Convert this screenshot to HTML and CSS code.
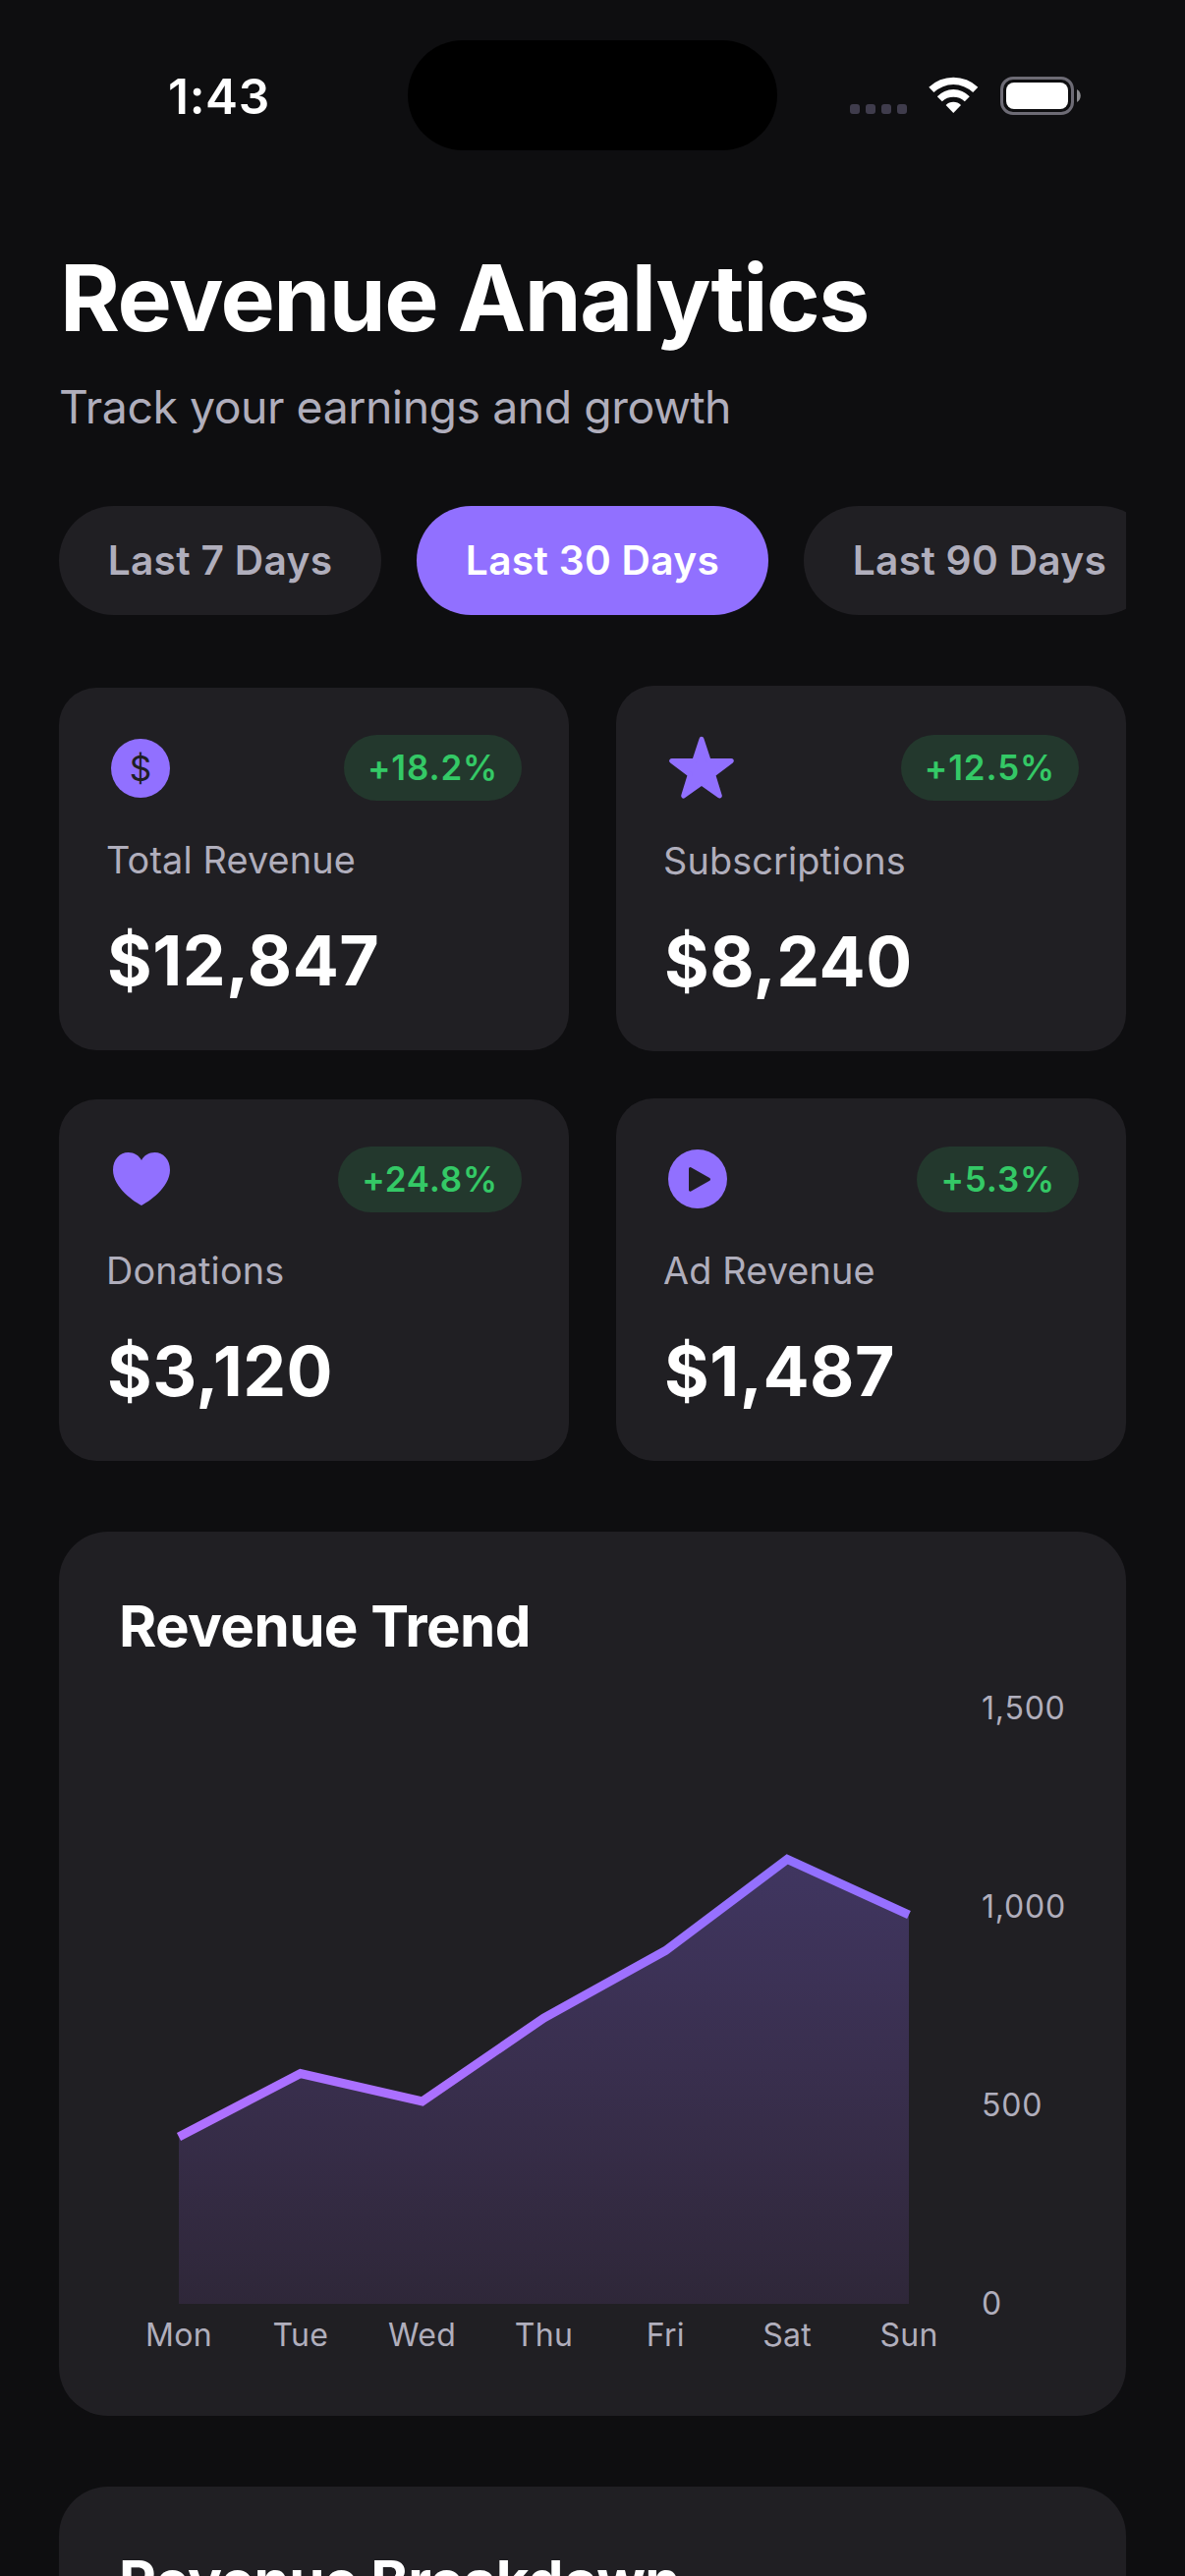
FILE: index.html
```html
<!DOCTYPE html>
<html lang="en">
<head>
  <meta charset="UTF-8">
  <meta name="viewport" content="width=device-width, initial-scale=1.0">
  <title>Revenue Analytics</title>
  <link rel="stylesheet" href="styles.css">
</head>
<body>
  <div class="status-bar">
    <div class="time">1:43</div>
    <div class="island"></div>
    <div class="status-icons">
      <div class="signal"><i></i><i></i><i></i><i></i></div>
      <svg class="wifi" width="51" height="38" viewBox="0 0 51 38" fill="#fff">
        <path d="M0.3 10.8A36 36 0 0 1 50.3 10.8L45.2 16A29 29 0 0 0 5.4 16Z"/>
        <path d="M8.8 20.2A22.6 22.6 0 0 1 41.8 20.2L36.8 25.2A17 17 0 0 0 13.8 25.2Z"/>
        <path d="M17.6 29A11 11 0 0 1 33 29L25.3 37Z"/>
      </svg>
      <svg class="battery" width="82" height="39" viewBox="0 0 82 39">
        <rect x="1.5" y="1.5" width="72" height="36" rx="11.5" fill="none" stroke="#6d6b75" stroke-width="3"/>
        <rect x="6" y="6" width="63" height="27" rx="8" fill="#fff"/>
        <path d="M78 13C83 15.500 83 23.500 78 26Z" fill="#8a8a8e"/>
      </svg>
    </div>
  </div>

  <main class="content">
    <h1>Revenue Analytics</h1>
    <p class="subtitle">Track your earnings and growth</p>

    <div class="filters">
      <button class="pill pill-short">Last 7 Days</button>
      <button class="pill active">Last 30 Days</button>
      <button class="pill">Last 90 Days</button>
    </div>

    <div class="stats">
      <div class="stat-card total">
        <div class="stat-header">
          <svg class="icon" width="72" height="66" viewBox="0 0 72 66">
            <circle cx="35" cy="34" r="30"/>
            <text class="dollar" x="35" y="46.500" text-anchor="middle">$</text>
          </svg>
          <span class="badge">+18.2%</span>
        </div>
        <div class="stat-label">Total Revenue</div>
        <div class="stat-value">$12,847</div>
      </div>

      <div class="stat-card subscriptions">
        <div class="stat-header">
          <svg class="icon" width="72" height="66" viewBox="0 0 72 66">
            <path class="rounded" d="M39 6.400L46.200 28.500L69.300 28.500L50.700 42.600L57.300 64L39 51L20.700 64L27.300 42.600L8.700 28.500L31.800 28.500Z"/>
          </svg>
          <span class="badge">+12.5%</span>
        </div>
        <div class="stat-label">Subscriptions</div>
        <div class="stat-value">$8,240</div>
      </div>

      <div class="stat-card donations">
        <div class="stat-header">
          <svg class="icon" width="72" height="66" viewBox="0 0 72 66">
            <path d="M36 60C30 57 7 42 7 24C7 13 14 6 22.500 6C28.500 6 33.500 9 36 14C38.500 9 43.500 6 49.500 6C58 6 65 13 65 24C65 42 42 57 36 60Z"/>
          </svg>
          <span class="badge">+24.8%</span>
        </div>
        <div class="stat-label">Donations</div>
        <div class="stat-value">$3,120</div>
      </div>

      <div class="stat-card ads">
        <div class="stat-header">
          <svg class="icon" width="72" height="66" viewBox="0 0 72 66">
            <circle cx="35" cy="34" r="30"/>
            <path class="play" d="M27.500 23.500L46.500 34.400L27.500 45.300Z"/>
          </svg>
          <span class="badge">+5.3%</span>
        </div>
        <div class="stat-label">Ad Revenue</div>
        <div class="stat-value">$1,487</div>
      </div>
    </div>

    <section class="panel">
      <h2>Revenue Trend</h2>
      <div class="chart">
        <svg class="plot" width="867" height="606" viewBox="0 0 867 606">
          <defs>
            <linearGradient id="area" x1="0" y1="0" x2="0" y2="1">
              <stop offset="0" stop-color="#9170ff" stop-opacity="0.28"/>
              <stop offset="1" stop-color="#b070ff" stop-opacity="0.1"/>
            </linearGradient>
            <linearGradient id="line" x1="0" y1="0" x2="0" y2="1">
              <stop offset="0" stop-color="#9170ff"/>
              <stop offset="1" stop-color="#b070ff"/>
            </linearGradient>
          </defs>
          <path fill="url(#area)" d="M62 606V436L185.800 371.500L309.700 400L433.500 315L557.300 246.500L681.200 153.500L805 210V606Z"/>
          <path fill="none" stroke="url(#line)" stroke-width="9" d="M62 436L185.800 371.500L309.700 400L433.500 315L557.300 246.500L681.200 153.500L805 210"/>
        </svg>
        <div class="y-axis">
          <span>1,500</span>
          <span>1,000</span>
          <span>500</span>
          <span>0</span>
        </div>
        <div class="x-axis">
          <span>Mon</span>
          <span>Tue</span>
          <span>Wed</span>
          <span>Thu</span>
          <span>Fri</span>
          <span>Sat</span>
          <span>Sun</span>
        </div>
      </div>
    </section>

    <section class="panel breakdown">
      <h2>Revenue Breakdown</h2>
    </section>
  </main>
</body>
</html>
```
FILE: styles.css
```css
:root {
  --bg-color: #0e0e10;
  --card-bg: #201f23;
  --primary: #9170ff;
  --text-secondary: #b0aebc;
  --green: #34c966;
  --green-bg: #23382d;
}

* {
  box-sizing: border-box;
  margin: 0;
  padding: 0;
}

body {
  width: 1206px;
  height: 2622px;
  overflow: hidden;
  background-color: var(--bg-color);
  color: #fff;
  font-family: Inter, "Liberation Sans", sans-serif;
}

/* Status bar */
.status-bar {
  display: grid;
  grid-template-columns: 415px 376px 1fr;
  align-items: center;
  height: 194px;
}

.time {
  padding-left: 171px;
  padding-top: 2px;
  font-size: 49.5px;
  font-weight: 600;
  line-height: 60px;
  letter-spacing: 0.7px;
}

.island {
  height: 112px;
  border-radius: 56px;
  background-color: #000;
}

.status-icons {
  display: flex;
  align-items: center;
  padding-left: 74px;
}

.signal {
  display: flex;
  gap: 6px;
  margin-right: 22px;
  padding-top: 28px;
}

.signal i {
  width: 10px;
  height: 10px;
  border-radius: 3px;
  background-color: #3f3c4c;
}

.wifi {
  margin-right: 22px;
}

.battery {
  margin-top: 1px;
}

/* Header */
.content {
  padding: 53px 60px 0;
}

h1 {
  padding-left: 1px;
  font-size: 93px;
  font-weight: 700;
  line-height: 112px;
  letter-spacing: -1.45px;
}

.subtitle {
  margin-top: 25px;
  font-size: 46.4px;
  line-height: 60px;
  letter-spacing: -0.47px;
  color: var(--text-secondary);
}

.filters {
  display: flex;
  gap: 36px;
  margin-top: 71px;
  overflow: hidden;
}

.pill {
  flex: none;
  width: 358px;
  height: 111px;
  border: none;
  border-radius: 56px;
  background-color: var(--card-bg);
  color: var(--text-secondary);
  font-family: inherit;
  font-size: 40.7px;
  font-weight: 600;
  letter-spacing: 0.3px;
  white-space: nowrap;
}

.pill-short {
  width: 328px;
}

.pill.active {
  background-color: var(--primary);
  color: #fff;
}

/* Stat cards */
.stats {
  display: grid;
  grid-template-columns: 519px 519px;
  gap: 48px;
  margin-top: 72px;
}

.stat-card {
  display: flex;
  flex-direction: column;
  align-self: end;
  gap: 36px;
  padding: 48px;
  border-radius: 38px;
  background-color: var(--card-bg);
}

.total {
  margin-bottom: 1px;
}

.stat-header {
  display: flex;
  justify-content: space-between;
  align-items: flex-start;
  height: 67px;
}

.subscriptions .stat-header {
  height: 70px;
}

.donations .stat-header {
  height: 66px;
}

.subscriptions .badge {
  margin-top: 2px;
}

.ads .badge {
  margin-top: 1px;
}

.icon {
  overflow: visible;
  fill: var(--primary);
}

.icon .rounded {
  stroke: var(--primary);
  stroke-width: 5;
  stroke-linejoin: round;
}

.icon .play {
  fill: var(--card-bg);
  stroke: var(--card-bg);
  stroke-width: 3;
  stroke-linejoin: round;
}

.icon .dollar {
  fill: var(--card-bg);
  font-size: 35px;
}

.badge {
  height: 67px;
  padding: 0 24px;
  border-radius: 34px;
  background-color: var(--green-bg);
  color: var(--green);
  font-size: 34.9px;
  font-weight: 600;
  line-height: 67px;
  letter-spacing: 0.9px;
}

.stat-label {
  font-size: 37.8px;
  line-height: 48px;
  letter-spacing: 0.15px;
  color: var(--text-secondary);
}

.stat-value {
  padding-left: 1px;
  font-size: 69.7px;
  font-weight: 700;
  line-height: 86px;
  letter-spacing: 0.5px;
}

/* Panels */
.panel {
  height: 900px;
  margin-top: 72px;
  padding: 60px;
  border-radius: 50px;
  background-color: var(--card-bg);
}

.breakdown {
  height: 91px;
  padding-bottom: 0;
  border-radius: 50px 50px 0 0;
  overflow: hidden;
}

h2 {
  padding-left: 1px;
  font-size: 58.3px;
  font-weight: 700;
  line-height: 72px;
  letter-spacing: -0.6px;
}

/* Chart */
.chart {
  display: grid;
  grid-template-columns: 867px 1fr;
  column-gap: 12px;
  row-gap: 12px;
  margin-top: 48px;
  color: var(--text-secondary);
  font-size: 32px;
  line-height: 40px;
}

.y-axis {
  display: flex;
  flex-direction: column;
  justify-content: space-between;
  margin: -20px 0;
  letter-spacing: 0.8px;
}

.x-axis {
  display: grid;
  grid-template-columns: repeat(7, 1fr);
  text-align: center;
  letter-spacing: 0.3px;
}
```
